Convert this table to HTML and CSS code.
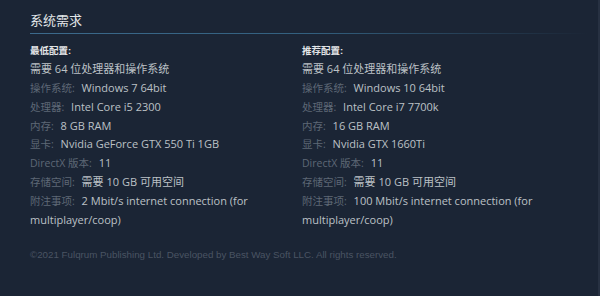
FILE: index.html
```html
<!DOCTYPE html>
<html lang="zh-CN">
<head>
<meta charset="utf-8">
<title>系统需求</title>
<link rel="stylesheet" href="styles.css">
</head>
<body>
<div class="panel">
  <h2 class="title">系统需求</h2>
  <div class="rule"></div>
  <div class="cols">
    <div class="col">
      <div class="head">最低配置:</div>
      <ul class="list">
        <li>需要 64 位处理器和操作系统</li>
        <li><span class="lbl">操作系统:</span> Windows 7 64bit</li>
        <li><span class="lbl">处理器:</span> Intel Core i5 2300</li>
        <li><span class="lbl">内存:</span> 8 GB RAM</li>
        <li><span class="lbl">显卡:</span> Nvidia GeForce GTX 550 Ti 1GB</li>
        <li><span class="lbl">DirectX 版本:</span> 11</li>
        <li><span class="lbl">存储空间:</span> 需要 10 GB 可用空间</li>
        <li><span class="lbl">附注事项:</span> 2 Mbit/s internet connection (for multiplayer/coop)</li>
      </ul>
    </div>
    <div class="col">
      <div class="head">推荐配置:</div>
      <ul class="list">
        <li>需要 64 位处理器和操作系统</li>
        <li><span class="lbl">操作系统:</span> Windows 10 64bit</li>
        <li><span class="lbl">处理器:</span> Intel Core i7 7700k</li>
        <li><span class="lbl">内存:</span> 16 GB RAM</li>
        <li><span class="lbl">显卡:</span> Nvidia GTX 1660Ti</li>
        <li><span class="lbl">DirectX 版本:</span> 11</li>
        <li><span class="lbl">存储空间:</span> 需要 10 GB 可用空间</li>
        <li><span class="lbl">附注事项:</span> 100 Mbit/s internet connection (for multiplayer/coop)</li>
      </ul>
    </div>
  </div>
  <div class="legal">©2021 Fulqrum Publishing Ltd. Developed by Best Way Soft LLC. All rights reserved.</div>
</div>
</body>
</html>
```
FILE: styles.css
```css
html, body {
  margin: 0;
  padding: 0;
  background: #1b2535;
}
body {
  width: 600px;
  height: 296px;
  overflow: hidden;
  font-family: "Open Sans", "Noto Sans CJK SC", sans-serif;
}
.panel {
  box-sizing: border-box;
  width: 600px;
  height: 296px;
  padding: 13px 10px 0 30px;
  border-right: 2px solid #273142;
}
.title {
  margin: 0;
  font-family: "Liberation Sans", "Noto Sans CJK SC", sans-serif;
  font-size: 13px;
  line-height: 16px;
  font-weight: normal;
  color: #e2e5e8;
  padding-bottom: 4px;
}
.rule {
  height: 1px;
  background: linear-gradient(to right, #3c6a8c 0%, #33607f 50%, rgba(51, 96, 127, 0) 100%);
}
.cols {
  display: grid;
  grid-template-columns: 272px 272px;
  margin-top: 7.5px;
}
.col {
  padding-right: 14px;
}
.head {
  font-family: "Liberation Sans", "Noto Sans CJK SC", sans-serif;
  font-size: 9.5px;
  line-height: 18.8px;
  color: #e4e6e8;
  font-weight: bold;
}
.list {
  list-style: none;
  margin: 0;
  padding: 0;
  font-size: 11px;
  line-height: 18.8px;
  color: #bcc1c6;
}
.list li {
  line-height: 18.8px;
}
.lbl {
  color: #5e6876;
  font-size: 10.5px;
  line-height: 1;
  margin-right: 4px;
}
.legal {
  margin-top: 19px;
  font-family: "Liberation Sans", sans-serif;
  font-size: 9.75px;
  line-height: 14px;
  color: #4a5463;
}
```
